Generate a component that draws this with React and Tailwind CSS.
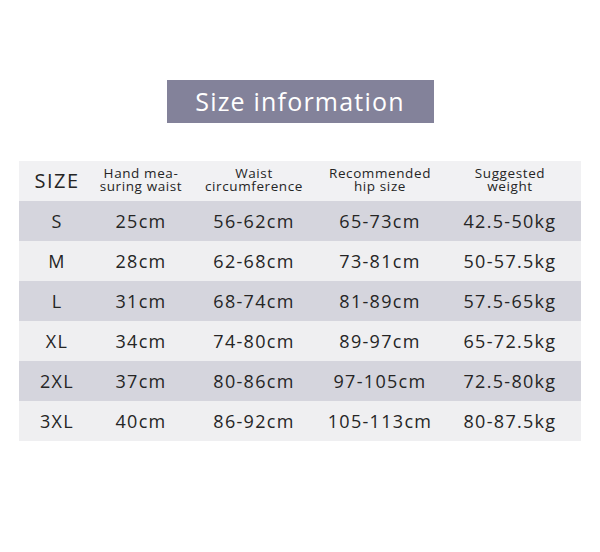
const headers = [
  { label: "SIZE", big: true },
  { label: "Hand mea-\nsuring waist" },
  { label: "Waist\ncircumference" },
  { label: "Recommended\nhip size" },
  { label: "Suggested\nweight" },
];

const rows = [
  ["S", "25cm", "56-62cm", "65-73cm", "42.5-50kg"],
  ["M", "28cm", "62-68cm", "73-81cm", "50-57.5kg"],
  ["L", "31cm", "68-74cm", "81-89cm", "57.5-65kg"],
  ["XL", "34cm", "74-80cm", "89-97cm", "65-72.5kg"],
  ["2XL", "37cm", "80-86cm", "97-105cm", "72.5-80kg"],
  ["3XL", "40cm", "86-92cm", "105-113cm", "80-87.5kg"],
];

const cols = "grid grid-cols-[76px_92px_134px_118px_142px]";

export default function App() {
  return (
    <div
      className="w-[600px] h-[552px] bg-white flex flex-col items-center text-[#252525]"
      style={{ fontFamily: '"Open Sans", "Noto Sans", sans-serif' }}
    >
      <div className="mt-[80px] w-[267px] h-[43px] bg-[#83829a] flex items-center justify-center text-white text-[25px] tracking-[1.2px]">
        Size information
      </div>

      <div className="mt-[38px] w-[562px]">
        <div className={`${cols} h-[40px] bg-[#f1f1f3]`}>
          {headers.map((h) => (
            <div
              key={h.label}
              className={
                h.big
                  ? "flex items-center justify-center text-[20px] tracking-[1.5px]"
                  : "flex items-center justify-center text-center whitespace-pre-line text-[13.5px] leading-[13px] tracking-[0.6px] pb-[3px]"
              }
            >
              {h.label}
            </div>
          ))}
        </div>
        {rows.map((r, i) => (
          <div
            key={r[0]}
            className={`${cols} h-[40px] ${i % 2 === 0 ? "bg-[#d5d5dd]" : "bg-[#efeff1]"}`}
          >
            {r.map((c, j) => (
              <div key={j} className="flex items-center justify-center text-[18px] tracking-[1.3px]">
                {c}
              </div>
            ))}
          </div>
        ))}
      </div>
    </div>
  );
}
